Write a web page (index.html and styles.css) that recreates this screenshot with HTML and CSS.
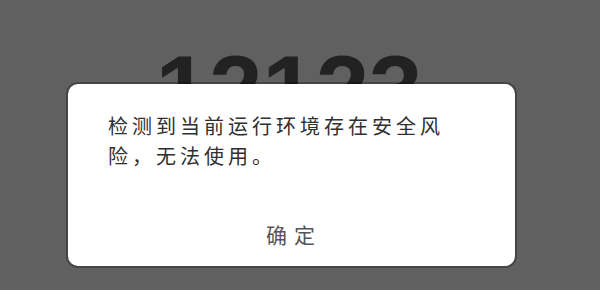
FILE: index.html
```html
<!DOCTYPE html>
<html lang="zh-CN">
<head>
<meta charset="utf-8">
<title>12123</title>
<link rel="stylesheet" href="styles.css">
</head>
<body>
<div class="page">
  <div class="brand">12123</div>
</div>
<div class="mask">
  <div class="dialog">
    <p class="message">检测到当前运行环境存在安全风险，无法使用。</p>
    <div class="actions"><span class="ok">确定</span></div>
  </div>
</div>
</body>
</html>
```

FILE: styles.css
```css
html, body {
  margin: 0;
  padding: 0;
  width: 600px;
  height: 290px;
  overflow: hidden;
  background: #606060;
  font-family: "Noto Sans CJK SC", "Noto Sans", sans-serif;
}

.page {
  display: flex;
  justify-content: center;
  padding: 42px 22px 0 0;
}

.brand {
  font-family: "Liberation Sans", Arial, sans-serif;
  font-weight: bold;
  font-size: 96px;
  line-height: 96px;
  color: #222222;
}

.mask {
  position: absolute;
  left: 0;
  top: 0;
  width: 600px;
  height: 290px;
}

.dialog {
  position: absolute;
  left: 68px;
  top: 84px;
  width: 447px;
  height: 182px;
  background: #ffffff;
  border-radius: 10px;
  box-shadow: 0 0 0 2px rgba(0, 0, 0, 0.28);
  display: flex;
  flex-direction: column;
  justify-content: space-between;
}

.message {
  margin: 0;
  padding: 27px 0 0 40px;
  width: 350px;
  font-size: 20px;
  line-height: 30px;
  letter-spacing: 4px;
  color: #303030;
}

.actions {
  height: 64px;
  display: flex;
  justify-content: center;
  align-items: center;
}

.ok {
  font-size: 21px;
  line-height: 64px;
  letter-spacing: 7px;
  padding-left: 5px;
  color: #555555;
}
```
